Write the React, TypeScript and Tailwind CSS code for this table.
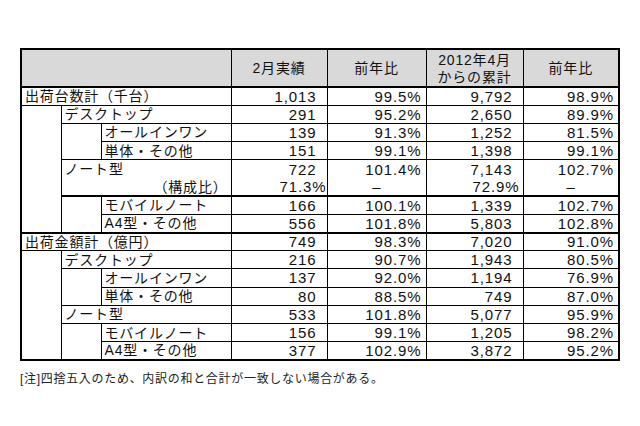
import React from 'react';

const font = "font-['Liberation_Sans','Noto_Sans_CJK_JP',sans-serif]";

// cell presets
const td = 'border border-black p-0 leading-none align-middle';
const num = `${td} text-right pr-[10px] text-[15px] tracking-[0.9px]`;
const pct = `${td} text-right pr-[4px] text-[15px] tracking-[0.9px]`;

const NumCells: React.FC<{ vals: string[]; extra?: string }> = ({ vals, extra = '' }) => (
  <>
    <td className={`${num} ${extra}`}>{vals[0]}</td>
    <td className={`${pct} ${extra}`}>{vals[1]}</td>
    <td className={`${num} ${extra}`}>{vals[2]}</td>
    <td className={`${pct} ${extra}`}>{vals[3]}</td>
  </>
);

export default function App() {
  const lbl = `${td} text-left pl-[3px] tracking-[0.8px]`;
  const rh = 'h-[18.2px]';

  return (
    <div className={`w-[640px] h-[426px] bg-white text-[#111] ${font}`}>
      <div className="pl-5 pt-[48px]">
        <table className="table-fixed border-collapse border-2 border-black w-[598px] text-[14px]">
          <colgroup>
            <col className="w-[40px]" />
            <col className="w-[40px]" />
            <col className="w-[130px]" />
            <col className="w-[96px]" />
            <col className="w-[99px]" />
            <col className="w-[97px]" />
            <col className="w-[96px]" />
          </colgroup>
          <thead>
            <tr className="h-[38px] bg-[#d9d9d9]">
              <th colSpan={3} className={`${td} border-b-2`}></th>
              <th className={`${td} border-b-2 font-normal text-center tracking-[0.8px]`}>2月実績</th>
              <th className={`${td} border-b-2 font-normal text-center tracking-[0.8px]`}>前年比</th>
              <th className={`${td} border-b-2 font-normal text-center tracking-[0.8px]`}>
                <div className="flex flex-col items-center gap-[3px]">
                  <span>2012年4月</span>
                  <span>からの累計</span>
                </div>
              </th>
              <th className={`${td} border-b-2 font-normal text-center tracking-[0.8px]`}>前年比</th>
            </tr>
          </thead>
          <tbody>
            {/* 出荷台数 */}
            <tr className={rh}>
              <td colSpan={3} className={lbl}>出荷台数計（千台）</td>
              <NumCells vals={['1,013', '99.5%', '9,792', '98.9%']} />
            </tr>
            <tr className={rh}>
              <td rowSpan={7} className={td}></td>
              <td colSpan={2} className={lbl}>デスクトップ</td>
              <NumCells vals={['291', '95.2%', '2,650', '89.9%']} />
            </tr>
            <tr className={rh}>
              <td rowSpan={2} className={td}></td>
              <td className={lbl}>オールインワン</td>
              <NumCells vals={['139', '91.3%', '1,252', '81.5%']} />
            </tr>
            <tr className={rh}>
              <td className={lbl}>単体・その他</td>
              <NumCells vals={['151', '99.1%', '1,398', '99.1%']} />
            </tr>
            <tr className={rh}>
              <td colSpan={2} className={`${lbl} border-b-0`}>ノート型</td>
              <NumCells vals={['722', '101.4%', '7,143', '102.7%']} extra="border-b-0" />
            </tr>
            <tr className={rh}>
              <td colSpan={2} className={`${td} border-t-0 border-b-2 text-right pr-[3px] tracking-[0.8px]`}>（構成比）</td>
              <td className={`${td} border-t-0 border-b-2 text-right pr-0 text-[15px] tracking-[0.9px]`}>71.3%</td>
              <td className={`${td} border-t-0 border-b-2 text-center text-[15px]`}>–</td>
              <td className={`${td} border-t-0 border-b-2 text-right pr-[3px] text-[15px] tracking-[0.9px]`}>72.9%</td>
              <td className={`${td} border-t-0 border-b-2 text-center text-[15px]`}>–</td>
            </tr>
            <tr className={rh}>
              <td rowSpan={2} className={td}></td>
              <td className={lbl}>モバイルノート</td>
              <NumCells vals={['166', '100.1%', '1,339', '102.7%']} />
            </tr>
            <tr className={rh}>
              <td className={lbl}>A4型・その他</td>
              <NumCells vals={['556', '101.8%', '5,803', '102.8%']} />
            </tr>

            {/* 出荷金額 */}
            <tr className={rh}>
              <td colSpan={3} className={`${lbl} border-t-2`}>出荷金額計（億円）</td>
              <NumCells vals={['749', '98.3%', '7,020', '91.0%']} extra="border-t-2" />
            </tr>
            <tr className={rh}>
              <td rowSpan={6} className={td}></td>
              <td colSpan={2} className={lbl}>デスクトップ</td>
              <NumCells vals={['216', '90.7%', '1,943', '80.5%']} />
            </tr>
            <tr className={rh}>
              <td rowSpan={2} className={td}></td>
              <td className={lbl}>オールインワン</td>
              <NumCells vals={['137', '92.0%', '1,194', '76.9%']} />
            </tr>
            <tr className={rh}>
              <td className={lbl}>単体・その他</td>
              <NumCells vals={['80', '88.5%', '749', '87.0%']} />
            </tr>
            <tr className={rh}>
              <td colSpan={2} className={lbl}>ノート型</td>
              <NumCells vals={['533', '101.8%', '5,077', '95.9%']} />
            </tr>
            <tr className={rh}>
              <td rowSpan={2} className={td}></td>
              <td className={lbl}>モバイルノート</td>
              <NumCells vals={['156', '99.1%', '1,205', '98.2%']} />
            </tr>
            <tr className={rh}>
              <td className={lbl}>A4型・その他</td>
              <NumCells vals={['377', '102.9%', '3,872', '95.2%']} />
            </tr>
          </tbody>
        </table>
        <p className="mt-[12px] text-[12px] leading-none tracking-[0.7px] text-[#222]">
          [注]四捨五入のため、内訳の和と合計が一致しない場合がある。
        </p>
      </div>
    </div>
  );
}
